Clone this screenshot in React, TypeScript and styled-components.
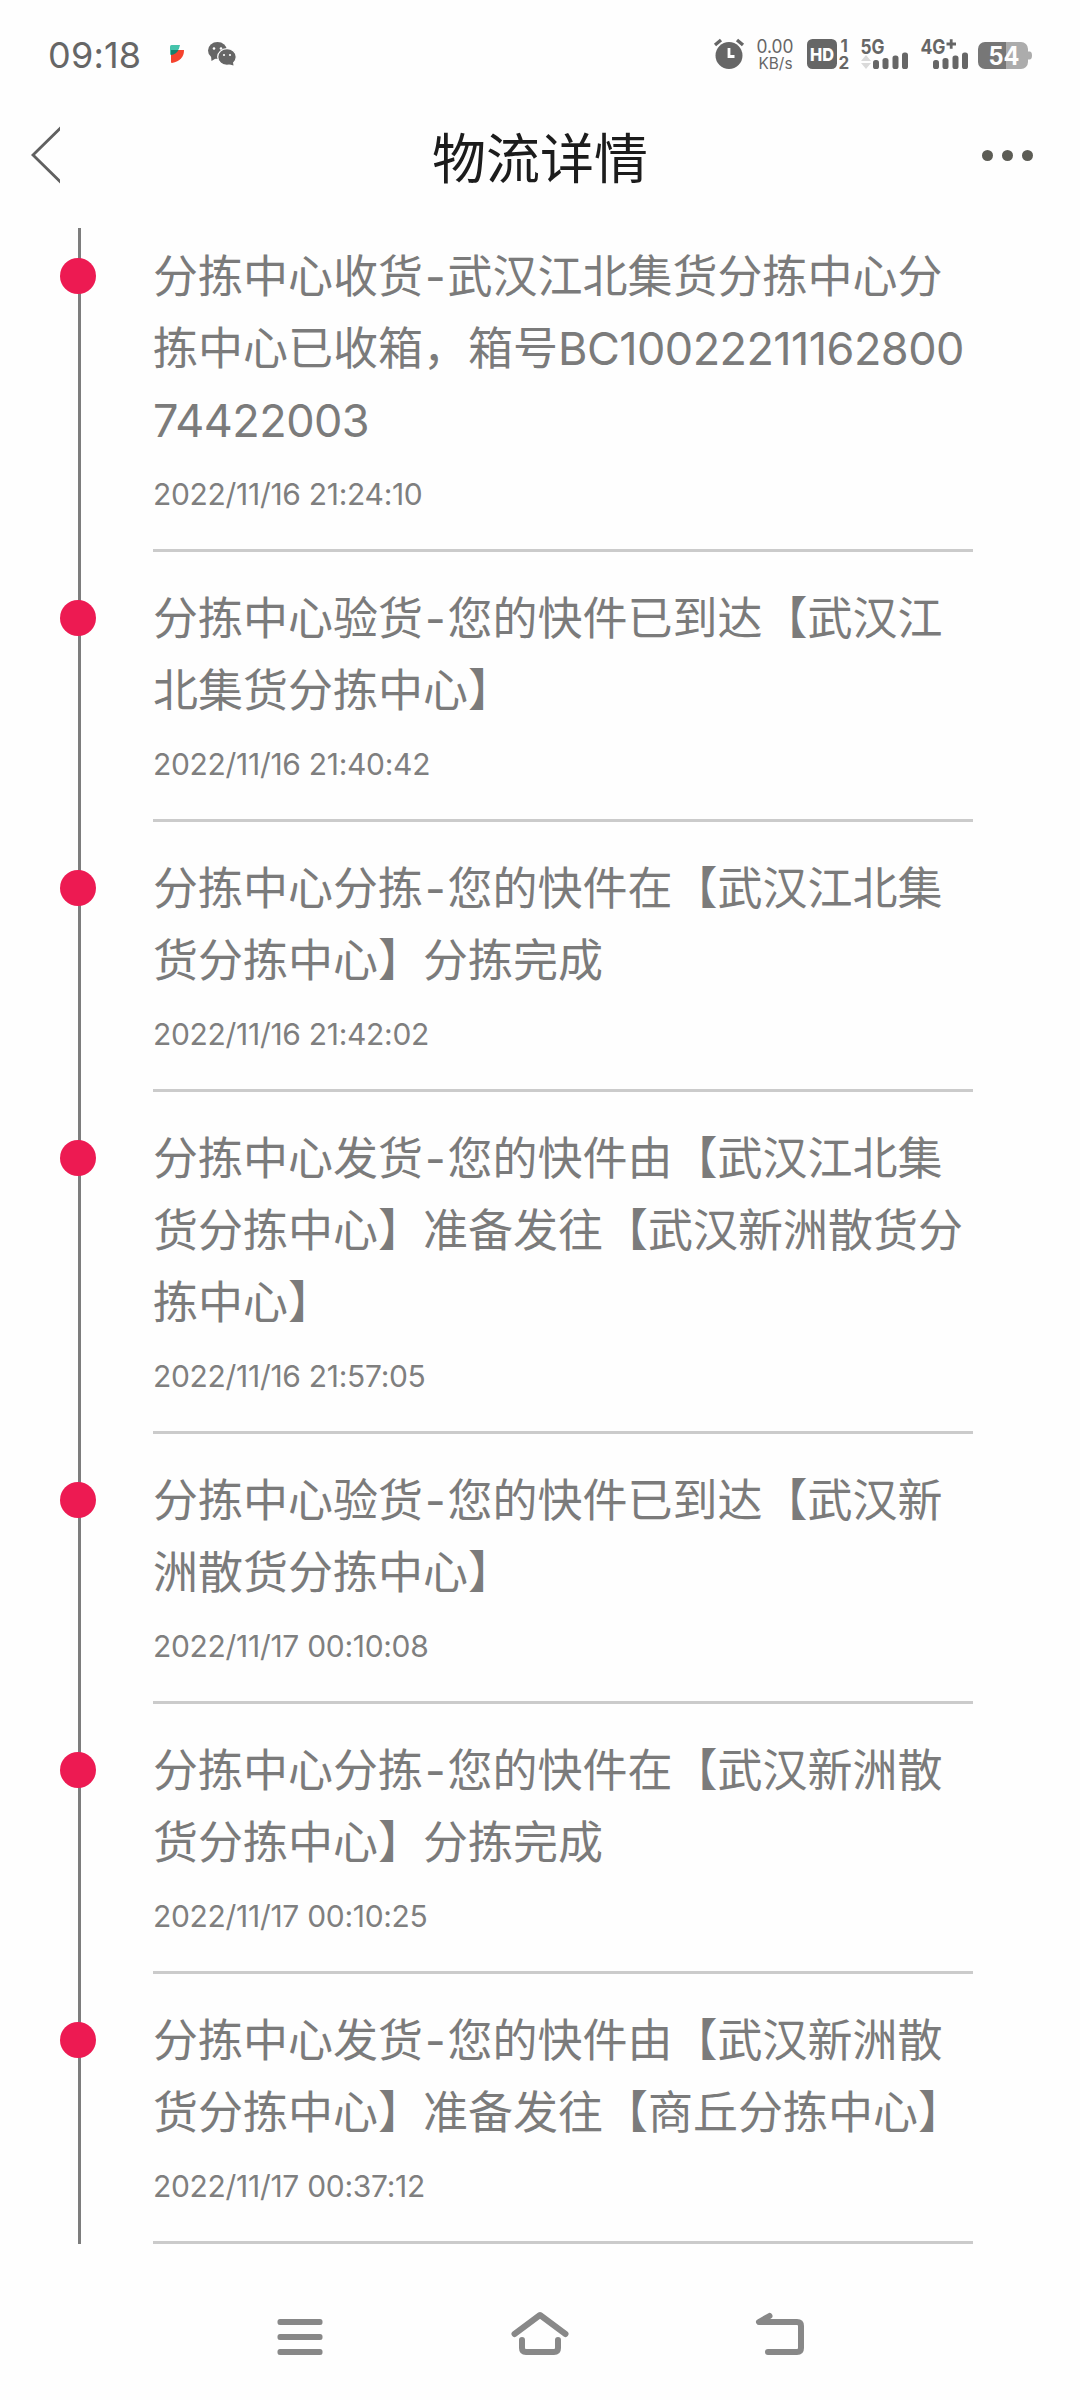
import React from "react";
import styled, { createGlobalStyle } from "styled-components";

const GlobalStyle = createGlobalStyle`
  *, *::before, *::after { box-sizing: border-box; }
  body {
    margin: 0;
    background: #fefefe;
    font-family: Inter, "Noto Sans CJK SC", sans-serif;
    text-spacing-trim: space-all;
  }
`;

const Screen = styled.div`
  width: 1080px;
  height: 2400px;
  display: flex;
  flex-direction: column;
  background: #fefefe;
  overflow: hidden;
`;

const StatusBar = styled.div`
  height: 108px;
  flex: none;
  display: flex;
  justify-content: space-between;
  padding: 0 44px 0 48px;
`;

const StatusGroup = styled.div`
  height: 110px;
  display: flex;
  align-items: center;
`;

const Clock = styled.div`
  font-size: 36px;
  line-height: 44px;
  letter-spacing: 0.2px;
  color: #666;
  width: 118px;
  white-space: nowrap;
`;

const StatusIcon = styled.svg`
  display: block;
  flex: none;
`;

const TitleBar = styled.header`
  height: 120px;
  flex: none;
  display: grid;
  grid-template-columns: 140px 1fr 140px;
`;

const Title = styled.h1`
  margin: 22px 0 0;
  font-size: 54px;
  line-height: 60px;
  font-weight: 400;
  text-align: center;
  color: #1c1c1c;
`;

const BackButton = styled.button`
  border: 0;
  background: none;
  padding: 17px 0 0 30px;
  display: flex;
  align-items: flex-start;
`;

const MoreButton = styled.button`
  border: 0;
  background: none;
  padding: 42px 47px 0 0;
  display: flex;
  justify-content: flex-end;
  align-items: flex-start;
  gap: 9px;
`;

const MoreDot = styled.span`
  width: 11px;
  height: 11px;
  border-radius: 50%;
  background: #5c5c55;
`;

const Timeline = styled.ol`
  list-style: none;
  margin: 0;
  padding: 0;
  flex: none;
`;

const Event = styled.li<{ $first: boolean }>`
  --lead: ${(p) => (p.$first ? 12 : 30)}px;
  display: grid;
  grid-template-columns: 93px 820px;
  padding-left: 60px;
`;

const Rail = styled.div`
  display: grid;
  justify-items: start;
`;

const RailLine = styled.span`
  grid-area: 1 / 1;
  width: 3px;
  margin-left: 18px;
  background: #7d7d7d;
`;

const RailDot = styled.span`
  grid-area: 1 / 1;
  width: 36px;
  height: 36px;
  margin-top: calc(var(--lead) + 18px);
  border-radius: 50%;
  background: #ed1a52;
`;

const EventBody = styled.div`
  padding: calc(var(--lead) + 1px) 0 32px;
  border-bottom: 3px solid #cbcbcb;
`;

const Message = styled.p`
  margin: 0;
  font-size: 45px;
  line-height: 72px;
  color: #7b7b7b;
`;

const MessageLine = styled.span`
  display: block;
  white-space: nowrap;
  height: 72px;
`;

const Latin = styled.span`
  letter-spacing: -0.55px;
`;

const Hyphen = styled.span`
  display: inline-block;
  width: 24.5px;
  text-align: center;
  font-weight: 400;
`;

const Time = styled.time`
  display: block;
  margin-top: 19px;
  height: 41px;
  font-size: 30px;
  line-height: 37px;
  letter-spacing: -0.3px;
  color: #7f7f7f;
`;

const SystemNav = styled.nav`
  flex: 1;
  display: flex;
  justify-content: space-between;
  align-items: flex-start;
  padding: 62px 270px 0;
`;

const events = [
  { lines: ["分拣中心收货-武汉江北集货分拣中心分", "拣中心已收箱，箱号BC10022211162800", "74422003"], time: "2022/11/16 21:24:10" },
  { lines: ["分拣中心验货-您的快件已到达【武汉江", "北集货分拣中心】"], time: "2022/11/16 21:40:42" },
  { lines: ["分拣中心分拣-您的快件在【武汉江北集", "货分拣中心】分拣完成"], time: "2022/11/16 21:42:02" },
  { lines: ["分拣中心发货-您的快件由【武汉江北集", "货分拣中心】准备发往【武汉新洲散货分", "拣中心】"], time: "2022/11/16 21:57:05" },
  { lines: ["分拣中心验货-您的快件已到达【武汉新", "洲散货分拣中心】"], time: "2022/11/17 00:10:08" },
  { lines: ["分拣中心分拣-您的快件在【武汉新洲散", "货分拣中心】分拣完成"], time: "2022/11/17 00:10:25" },
  { lines: ["分拣中心发货-您的快件由【武汉新洲散", "货分拣中心】准备发往【商丘分拣中心】"], time: "2022/11/17 00:37:12" },
];

function renderLine(text: string) {
  return text.split(/(-|[A-Z0-9]+)/).map((part, i) => {
    if (part === "-") return <Hyphen key={i}>-</Hyphen>;
    if (/^[A-Z0-9]+$/.test(part)) return <Latin key={i}>{part}</Latin>;
    return part;
  });
}

function SignalBars({ x }: { x: number }) {
  return (
    <g fill="#666">
      <rect x={x} y="60" width="6" height="9" rx="2.6" />
      <rect x={x + 9.5} y="58" width="6" height="11" rx="2.6" />
      <rect x={x + 19.5} y="55.5" width="6" height="13.5" rx="2.6" />
      <rect x={x + 29} y="52.5" width="6" height="16.5" rx="2.6" />
    </g>
  );
}

function SystemIndicators() {
  return (
    <StatusIcon width="326" height="40" viewBox="710 35 326 40" fontFamily="Inter, sans-serif" fill="#666">
      <circle cx="729" cy="55.5" r="13.5" />
      <path d="M715 45l6-5M743 45l-6-5" stroke="#666" strokeWidth="3.4" />
      <path d="M729 48v8.500h5.500" stroke="#fefefe" strokeWidth="2.800" fill="none" />
      <text x="756.500" y="53" fontSize="18.500" textLength="37" lengthAdjust="spacingAndGlyphs">0.00</text>
      <text x="758.500" y="68.500" fontSize="15.500" textLength="34" lengthAdjust="spacingAndGlyphs">KB/s</text>
      <rect x="807" y="39" width="30" height="30" rx="5.500" />
      <text x="810" y="60.500" fontSize="18" fontWeight="800" fill="#fefefe" textLength="24" lengthAdjust="spacingAndGlyphs">HD</text>
      <text x="840.500" y="51.500" fontSize="17" fontWeight="700">1</text>
      <text x="838.500" y="69" fontSize="17" fontWeight="700">2</text>
      <text x="860.500" y="53.500" fontSize="20" fontWeight="700" textLength="24" lengthAdjust="spacingAndGlyphs">5G</text>
      <path d="M861 61l5-6 5 6zM861 63l5 6 5-6z" fill="#dadada" />
      <SignalBars x={873} />
      <text x="920.500" y="53.500" fontSize="20" fontWeight="700" textLength="25" lengthAdjust="spacingAndGlyphs">4G</text>
      <path d="M946.500 44h9.500M951.200 39.300v9.500" stroke="#666" strokeWidth="2.800" fill="none" />
      <SignalBars x={933} />
      <path d="M985 42h21v27h-21a7 7 0 0 1-7-7V49a7 7 0 0 1 7-7z" fill="#777" />
      <path d="M1006 42h15a7 7 0 0 1 7 7v2.500h1.500q2.500 0 2.500 4t-2.500 4H1028V62a7 7 0 0 1-7 7h-15z" fill="#acacac" />
      <text x="988.500" y="65" fontSize="25" fontWeight="700" fill="#fefefe" textLength="31" lengthAdjust="spacingAndGlyphs">54</text>
    </StatusIcon>
  );
}

function NotificationIcons() {
  return (
    <StatusIcon width="72" height="40" viewBox="166 35 72 40">
      <path d="M171.500 45h8.500q-.5 4-3 6l-7 4v-8.500q0-1.500 1.500-1.500z" fill="#45c3ab" />
      <path d="M171 54l5.500-4H184q0 10.500-12 13q-1 0-1-1z" fill="#f5432e" />
      <path d="M171 50h7.500q-2.500 4.500-7.500 5z" fill="#15806c" />
      <ellipse cx="217.500" cy="50.500" rx="9.500" ry="8.500" fill="#666" />
      <path d="M211 56l.5 5 5-3z" fill="#666" />
      <ellipse cx="227" cy="57" rx="9.300" ry="8.300" fill="#666" stroke="#fefefe" strokeWidth="1.300" />
      <path d="M228 64l5.500 1.500-.7-4z" fill="#666" />
      <g fill="#fefefe">
        <circle cx="214" cy="48.500" r="1.300" />
        <circle cx="221" cy="48.500" r="1.300" />
        <circle cx="224" cy="55" r="1.100" />
        <circle cx="230" cy="55" r="1.100" />
      </g>
    </StatusIcon>
  );
}

export default function App() {
  return (
    <Screen>
      <GlobalStyle />
      <StatusBar>
        <StatusGroup>
          <Clock>09:18</Clock>
          <NotificationIcons />
        </StatusGroup>
        <StatusGroup>
          <SystemIndicators />
        </StatusGroup>
      </StatusBar>
      <TitleBar>
        <BackButton aria-label="返回">
          <StatusIcon width="30" height="60" viewBox="30 125 30 60">
            <path d="M61 127.500L33 155l28 27.500" fill="none" stroke="#606060" strokeWidth="2.800" />
          </StatusIcon>
        </BackButton>
        <Title>物流详情</Title>
        <MoreButton aria-label="更多">
          <MoreDot />
          <MoreDot />
          <MoreDot />
        </MoreButton>
      </TitleBar>
      <Timeline>
        {events.map((event, i) => (
          <Event key={event.time} $first={i === 0}>
            <Rail>
              <RailLine />
              <RailDot />
            </Rail>
            <EventBody>
              <Message>
                {event.lines.map((line) => (
                  <MessageLine key={line}>{renderLine(line)}</MessageLine>
                ))}
              </Message>
              <Time>{event.time}</Time>
            </EventBody>
          </Event>
        ))}
      </Timeline>
      <SystemNav>
        <StatusIcon width="60" height="60" viewBox="270 2306 60 60" fill="#888">
          <rect x="277.500" y="2319" width="45" height="6" rx="2.500" />
          <rect x="277.500" y="2334" width="45" height="6" rx="2.500" />
          <rect x="277.500" y="2349" width="45" height="6" rx="2.500" />
        </StatusIcon>
        <StatusIcon width="60" height="60" viewBox="510 2306 60 60" fill="none" stroke="#888" strokeWidth="6" strokeLinecap="round" strokeLinejoin="round">
          <path d="M514.500 2334L540 2315l25.500 19" />
          <path d="M522 2340v8q0 4 4 4h28q4 0 4-4v-8" />
        </StatusIcon>
        <StatusIcon width="60" height="60" viewBox="750 2306 60 60" fill="none" stroke="#888" strokeWidth="6" strokeLinecap="round" strokeLinejoin="round">
          <path d="M769.500 2316L759 2322h38q4 0 4 4v22q0 4-4 4h-29" />
        </StatusIcon>
      </SystemNav>
    </Screen>
  );
}
